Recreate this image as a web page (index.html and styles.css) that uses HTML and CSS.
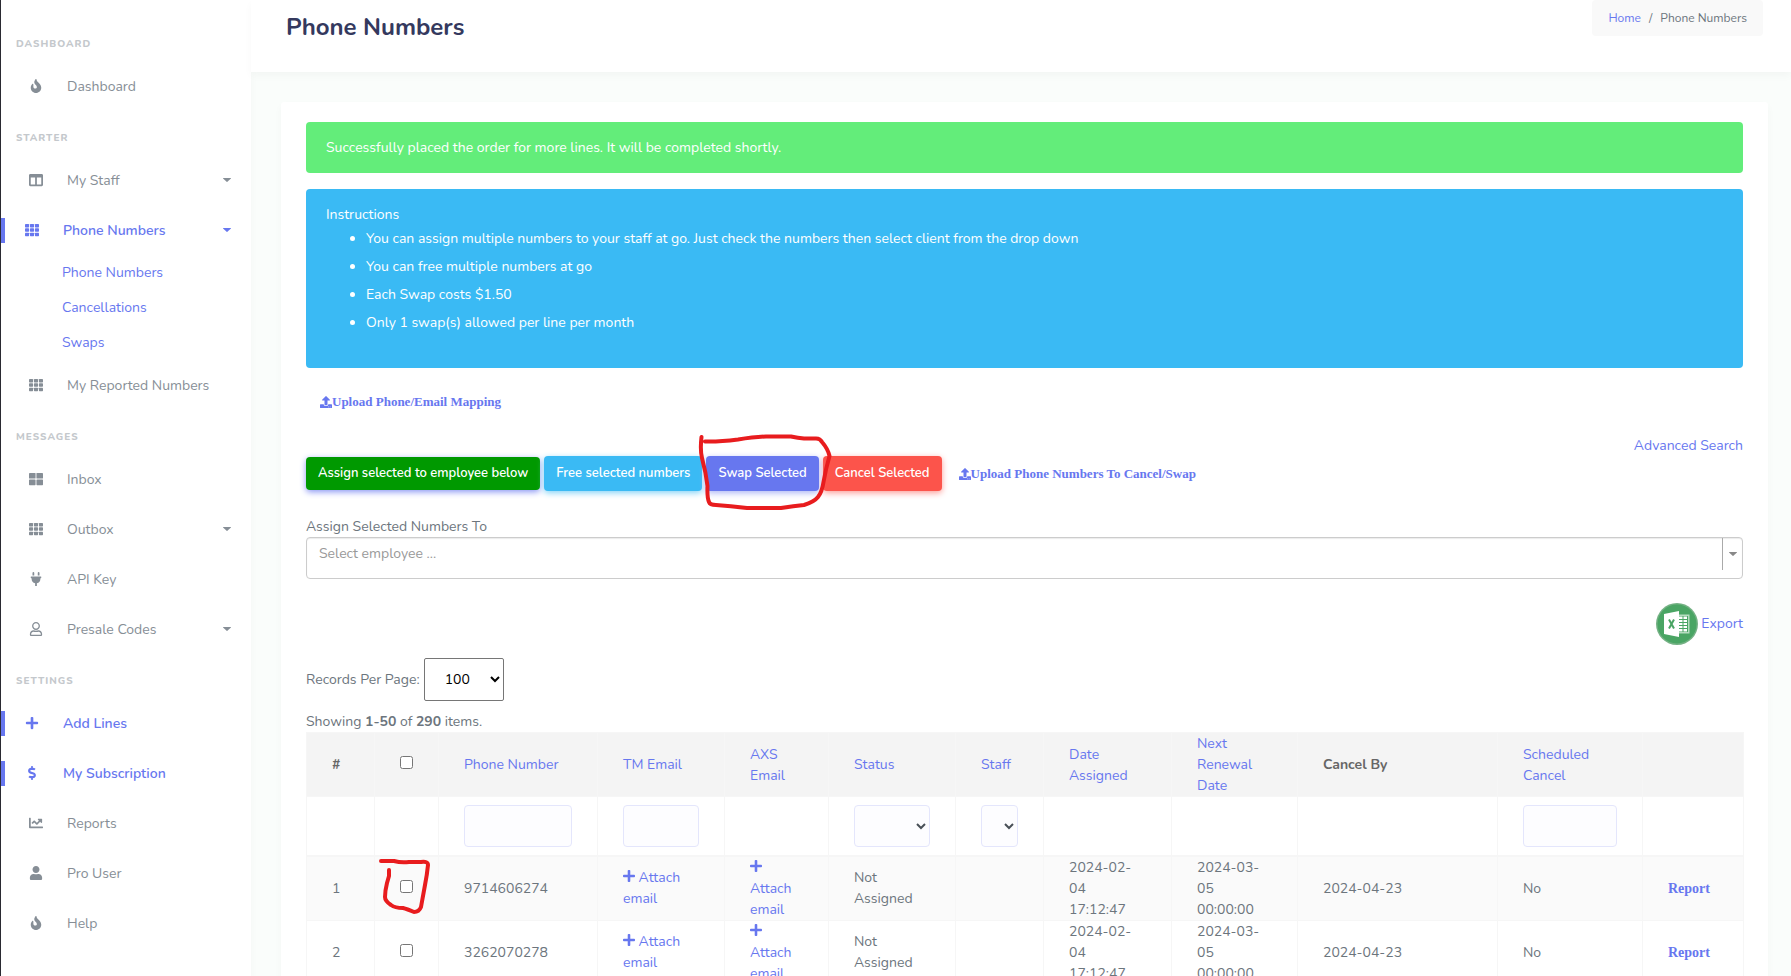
FILE: index.html
```html
<!DOCTYPE html>
<html lang="en">
<head>
<meta charset="utf-8">
<meta name="viewport" content="width=device-width, initial-scale=1">
<title>Phone Numbers</title>
<link rel="stylesheet" href="styles.css">
</head>
<body>
<svg class="sprite" aria-hidden="true">
  <symbol id="i-fire" viewBox="0 0 384 512"><path d="M216 23.86c0-23.8-30.65-32.77-44.15-13.04C48 191.85 224 200 224 288c0 35.63-29.11 64.46-64.85 63.99-35.17-.45-63.15-29.77-63.15-64.94v-85.51c0-21.7-26.47-32.23-41.43-16.5C27.8 213.16 0 261.33 0 320c0 105.87 86.13 192 192 192s192-86.13 192-192c0-170.29-168-193-168-296.14z"/></symbol>
  <symbol id="i-columns" viewBox="0 0 512 512"><path d="M464 32H48C21.49 32 0 53.49 0 80v352c0 26.51 21.49 48 48 48h416c26.51 0 48-21.49 48-48V80c0-26.51-21.49-48-48-48zM224 416H64V160h160v256zm224 0H288V160h160v256z"/></symbol>
  <symbol id="i-th" viewBox="0 0 512 512"><g><rect x="0" y="32" width="149" height="128" rx="24"/><rect x="181" y="32" width="150" height="128" rx="24"/><rect x="363" y="32" width="149" height="128" rx="24"/><rect x="0" y="192" width="149" height="128" rx="24"/><rect x="181" y="192" width="150" height="128" rx="24"/><rect x="363" y="192" width="149" height="128" rx="24"/><rect x="0" y="352" width="149" height="128" rx="24"/><rect x="181" y="352" width="150" height="128" rx="24"/><rect x="363" y="352" width="149" height="128" rx="24"/></g></symbol>
  <symbol id="i-th-large" viewBox="0 0 512 512"><g><rect x="0" y="32" width="240" height="208" rx="24"/><rect x="272" y="32" width="240" height="208" rx="24"/><rect x="0" y="272" width="240" height="208" rx="24"/><rect x="272" y="272" width="240" height="208" rx="24"/></g></symbol>
  <symbol id="i-plug" viewBox="0 0 384 512"><path d="M320 32a32 32 0 0 0-64 0v96h64zm48 128H16A16 16 0 0 0 0 176v32a16 16 0 0 0 16 16h16v32a160.07 160.07 0 0 0 128 156.8V512h64v-99.2A160.07 160.07 0 0 0 352 256v-32h16a16 16 0 0 0 16-16v-32a16 16 0 0 0-16-16zM128 32a32 32 0 0 0-64 0v96h64z"/></symbol>
  <symbol id="i-user" viewBox="0 0 448 512"><path d="M224 256c70.7 0 128-57.3 128-128S294.7 0 224 0 96 57.3 96 128s57.3 128 128 128zm89.6 32h-16.7c-22.2 10.2-46.9 16-72.9 16s-50.6-5.8-72.9-16h-16.7C60.2 288 0 348.2 0 422.4V464c0 26.5 21.5 48 48 48h352c26.5 0 48-21.5 48-48v-41.6c0-74.2-60.2-134.4-134.4-134.4z"/></symbol>
  <symbol id="i-user-o" viewBox="0 0 448 512"><path d="M313.6 304c-28.7 0-42.5 16-89.6 16-47.1 0-60.8-16-89.6-16C60.2 304 0 364.2 0 438.4V464c0 26.5 21.5 48 48 48h352c26.5 0 48-21.5 48-48v-25.6c0-74.2-60.2-134.4-134.4-134.4zM400 464H48v-25.6c0-47.6 38.8-86.4 86.4-86.4 14.6 0 38.3 16 89.6 16 51.7 0 74.9-16 89.6-16 47.6 0 86.4 38.8 86.4 86.4V464zM224 288c79.5 0 144-64.5 144-144S303.5 0 224 0 80 64.5 80 144s64.5 144 144 144zm0-240c52.9 0 96 43.1 96 96s-43.1 96-96 96-96-43.1-96-96 43.1-96 96-96z"/></symbol>
  <symbol id="i-plus" viewBox="0 0 448 512"><path d="M416 208H272V64c0-17.67-14.33-32-32-32h-32c-17.67 0-32 14.33-32 32v144H32c-17.67 0-32 14.33-32 32v32c0 17.67 14.33 32 32 32h144v144c0 17.67 14.33 32 32 32h32c17.67 0 32-14.33 32-32V304h144c17.67 0 32-14.33 32-32v-32c0-17.67-14.33-32-32-32z"/></symbol>
  <symbol id="i-dollar" viewBox="0 0 288 512"><path d="M209.2 233.4l-108-31.6C88.7 198.2 80 186.5 80 173.5c0-16.3 13.2-29.5 29.5-29.5h66.3c12.2 0 24.2 3.7 34.2 10.5 6.1 4.1 14.3 3.1 19.5-2l34.8-34c7.1-6.9 6.1-18.4-1.8-24.5C238 74.8 207.4 64.1 176 64V16c0-8.8-7.2-16-16-16h-32c-8.8 0-16 7.2-16 16v48h-2.5C45.8 64-5.4 118.7.5 183.6c4.2 46.1 39.4 83.6 83.8 96.6l102.5 30c12.5 3.7 21.2 15.3 21.2 28.3 0 16.3-13.2 29.5-29.5 29.5h-66.3C100 368 88 364.3 78 357.5c-6.1-4.1-14.3-3.1-19.5 2l-34.8 34c-7.1 6.9-6.1 18.4 1.8 24.5 24.5 19.2 55.1 29.9 86.5 30v48c0 8.8 7.2 16 16 16h32c8.8 0 16-7.2 16-16v-48.2c46.6-.9 90.3-28.6 105.7-72.7 21.5-61.6-14.6-124.8-72.5-141.7z"/></symbol>
  <symbol id="i-chart" viewBox="0 0 512 512"><path d="M496 384H64V80c0-8.84-7.16-16-16-16H16C7.16 64 0 71.16 0 80v336c0 17.67 14.33 32 32 32h464c8.84 0 16-7.16 16-16v-32c0-8.84-7.16-16-16-16zM464 96H345.94c-21.38 0-32.09 25.85-16.97 40.97l32.4 32.4L288 242.75l-73.37-73.37c-12.5-12.5-32.76-12.5-45.25 0l-68.69 68.69c-6.25 6.25-6.25 16.38 0 22.63l22.62 22.62c6.25 6.25 16.38 6.25 22.63 0L192 237.25l73.37 73.37c12.5 12.5 32.76 12.5 45.25 0l96-96 32.4 32.4c15.12 15.12 40.97 4.41 40.97-16.97V112c.01-8.84-7.15-16-15.99-16z"/></symbol>
  <symbol id="i-upload" viewBox="0 0 512 512"><path d="M296 384h-80c-13.3 0-24-10.7-24-24V192h-87.7c-17.8 0-26.7-21.5-14.1-34.1L242.3 5.7c7.5-7.5 19.8-7.5 27.3 0l152.2 152.2c12.6 12.6 3.7 34.1-14.1 34.1H320v168c0 13.3-10.7 24-24 24zm216-8v112c0 13.3-10.7 24-24 24H24c-13.3 0-24-10.7-24-24V376c0-13.3 10.7-24 24-24h136v8c0 30.9 25.1 56 56 56h80c30.9 0 56-25.1 56-56v-8h136c13.3 0 24 10.7 24 24zm-124 88c0-11-9-20-20-20s-20 9-20 20 9 20 20 20 20-9 20-20zm64 0c0-11-9-20-20-20s-20 9-20 20 9 20 20 20 20-9 20-20z"/></symbol>
  <symbol id="i-caret" viewBox="0 0 8 4"><path d="M.4 0h7.2c.4 0 .5.4.3.6L4.4 3.8a.6.6 0 0 1-.8 0L.1.6C-.1.4 0 0 .4 0z"/></symbol>
</svg>
<div class="layout">
  <nav class="sidebar" aria-label="Main">
    <h2 class="menu-header">DASHBOARD</h2>
    <a class="menu-item" href="#"><span class="menu-icon"><svg class="icon"><use href="#i-fire"/></svg></span><span class="menu-label">Dashboard</span></a>
    <h2 class="menu-header">STARTER</h2>
    <a class="menu-item" href="#"><span class="menu-icon"><svg class="icon"><use href="#i-columns"/></svg></span><span class="menu-label">My Staff</span><svg class="caret"><use href="#i-caret"/></svg></a>
    <a class="menu-item active" href="#"><span class="menu-icon"><svg class="icon"><use href="#i-th"/></svg></span><span class="menu-label">Phone Numbers</span><svg class="caret"><use href="#i-caret"/></svg></a>
    <div class="submenu">
      <a class="submenu-item" href="#">Phone Numbers</a>
      <a class="submenu-item" href="#">Cancellations</a>
      <a class="submenu-item" href="#">Swaps</a>
    </div>
    <a class="menu-item" href="#"><span class="menu-icon"><svg class="icon"><use href="#i-th"/></svg></span><span class="menu-label">My Reported Numbers</span></a>
    <h2 class="menu-header">MESSAGES</h2>
    <a class="menu-item" href="#"><span class="menu-icon"><svg class="icon"><use href="#i-th-large"/></svg></span><span class="menu-label">Inbox</span></a>
    <a class="menu-item" href="#"><span class="menu-icon"><svg class="icon"><use href="#i-th"/></svg></span><span class="menu-label">Outbox</span><svg class="caret"><use href="#i-caret"/></svg></a>
    <a class="menu-item" href="#"><span class="menu-icon"><svg class="icon"><use href="#i-plug"/></svg></span><span class="menu-label">API Key</span></a>
    <a class="menu-item" href="#"><span class="menu-icon"><svg class="icon"><use href="#i-user-o"/></svg></span><span class="menu-label">Presale Codes</span><svg class="caret"><use href="#i-caret"/></svg></a>
    <h2 class="menu-header">SETTINGS</h2>
    <a class="menu-item active" href="#"><span class="menu-icon"><svg class="icon"><use href="#i-plus"/></svg></span><span class="menu-label">Add Lines</span></a>
    <a class="menu-item active" href="#"><span class="menu-icon"><svg class="icon"><use href="#i-dollar"/></svg></span><span class="menu-label">My Subscription</span></a>
    <a class="menu-item" href="#"><span class="menu-icon"><svg class="icon"><use href="#i-chart"/></svg></span><span class="menu-label">Reports</span></a>
    <a class="menu-item" href="#"><span class="menu-icon"><svg class="icon"><use href="#i-user"/></svg></span><span class="menu-label">Pro User</span></a>
    <a class="menu-item" href="#"><span class="menu-icon"><svg class="icon"><use href="#i-fire"/></svg></span><span class="menu-label">Help</span></a>
  </nav>
  <main class="main">
    <header class="page-header">
      <h1 class="page-title">Phone Numbers</h1>
      <nav class="breadcrumb" aria-label="Breadcrumb"><a href="#">Home</a><span>/</span><span>Phone Numbers</span></nav>
    </header>
    <section class="card">
      <div class="alert alert-success" role="status">Successfully placed the order for more lines. It will be completed shortly.</div>
      <div class="alert alert-info">
        Instructions
        <ul class="instructions">
          <li>You can assign multiple numbers to your staff at go. Just check the numbers then select client from the drop down</li>
          <li>You can free multiple numbers at go</li>
          <li>Each Swap costs $1.50</li>
          <li>Only 1 swap(s) allowed per line per month</li>
        </ul>
      </div>
      <div class="upload-row"><a class="upload-link" href="#"><svg class="icon-sm"><use href="#i-upload"/></svg>Upload Phone/Email Mapping</a></div>
      <div class="search-row"><a href="#">Advanced Search</a></div>
      <div class="actions">
        <button class="btn btn-assign" type="button">Assign selected to employee below</button>
        <button class="btn btn-info" type="button">Free selected numbers</button>
        <span class="marked">
          <button class="btn btn-primary" type="button">Swap Selected</button>
          <svg class="mark mark-button" viewBox="0 0 138 80" aria-hidden="true"><path d="M5.500 5Q4 18 6 26Q10 41 11.500 54Q11 66 13 70Q14 73 20 73Q34 74 51 76H85Q98 74 108 73Q118 70 122 65Q126 60 127.500 50Q130 36 133.500 24Q132 17 126 10Q124 6 119 6.500H108Q102 6 95 4.500H70Q58 5 42 7.500Q22 10 9 9.500"/></svg>
        </span>
        <button class="btn btn-danger" type="button">Cancel Selected</button>
        <a class="upload-link" href="#"><svg class="icon-sm"><use href="#i-upload"/></svg>Upload Phone Numbers To Cancel/Swap</a>
      </div>
      <label class="field-label" for="employee">Assign Selected Numbers To</label>
      <div class="combo">
        <select id="employee" class="combo-select"><option>Select employee ...</option></select>
        <span class="combo-arrow"><svg class="caret"><use href="#i-caret"/></svg></span>
      </div>
      <div class="export-row">
        <a class="export-link" href="#">
          <svg class="excel" viewBox="0 0 42 42" aria-hidden="true"><circle cx="21" cy="21" r="21" fill="#74b184"/><circle cx="21" cy="21" r="19.500" fill="#4aa564"/><path d="M22 11.500h11.500v19H22z" fill="#b6dcc0"/><path d="M23 13h9v16h-9z" fill="#4aa564"/><path d="M23 13.500h3.500V16H23zM27.500 13.500H31V16h-3.500zM23 17h3.500v2H23zM27.500 17H31v2h-3.500zM23 20h3.500v2H23zM27.500 20H31v2h-3.500zM23 23h3.500v2H23zM27.500 23H31v2h-3.500zM23 26h3.500v2.500H23zM27.500 26H31v2.500h-3.500z" fill="#fff"/><path d="M8 11l15-3v26L8 31z" fill="#fff"/><path d="M13 16.500l5 9M18 16.500l-5 9" stroke="#4aa564" stroke-width="2" fill="none"/></svg>
          Export
        </a>
      </div>
      <div class="records-row">
        <label for="per-page">Records Per Page:</label>
        <select id="per-page" class="per-page"><option>100</option></select>
      </div>
      <div class="summary">Showing <b>1-50</b> of <b>290</b> items.</div>
      <table class="grid">
        <colgroup><col class="c-num"><col class="c-check"><col class="c-phone"><col class="c-tm"><col class="c-axs"><col class="c-status"><col class="c-staff"><col class="c-date"><col class="c-renew"><col class="c-cancel"><col class="c-sched"><col class="c-report"></colgroup>
        <thead>
          <tr class="head-row"><th>#</th><th><input type="checkbox" aria-label="Select all"></th><th><a href="#">Phone Number</a></th><th><a href="#">TM Email</a></th><th><a href="#">AXS Email</a></th><th><a href="#">Status</a></th><th><a href="#">Staff</a></th><th><a href="#">Date Assigned</a></th><th><a href="#">Next Renewal Date</a></th><th>Cancel By</th><th><a href="#">Scheduled Cancel</a></th><th></th></tr>
          <tr class="filter-row"><td></td><td></td><td><input class="filter" type="text" aria-label="Phone Number"></td><td><input class="filter" type="text" aria-label="TM Email"></td><td></td><td><select class="filter" aria-label="Status"><option></option></select></td><td><select class="filter" aria-label="Staff"><option></option></select></td><td></td><td></td><td></td><td><input class="filter" type="text" aria-label="Scheduled Cancel"></td><td></td></tr>
        </thead>
        <tbody>
          <tr class="odd"><td>1</td><td><span class="marked-cell"><input type="checkbox" aria-label="Select 9714606274"><svg class="mark mark-check" viewBox="0 0 54 60" aria-hidden="true"><path d="M4 6H17Q24 8 32 7H44Q51 6 51 10Q50 20 48 30L44 52Q42 57 37 57Q30 54 26 53Q18 53 14 50Q8 46 8 42Q8 36 10 28L12 21V15"/></svg></span></td><td>9714606274</td><td><a href="#"><svg class="plus"><use href="#i-plus"/></svg> Attach email</a></td><td><a href="#"><svg class="plus"><use href="#i-plus"/></svg> Attach email</a></td><td>Not Assigned</td><td></td><td>2024-02-04 17:12:47</td><td>2024-03-05 00:00:00</td><td>2024-04-23</td><td>No</td><td><a class="report" href="#">Report</a></td></tr>
          <tr><td>2</td><td><input type="checkbox" aria-label="Select 3262070278"></td><td>3262070278</td><td><a href="#"><svg class="plus"><use href="#i-plus"/></svg> Attach email</a></td><td><a href="#"><svg class="plus"><use href="#i-plus"/></svg> Attach email</a></td><td>Not Assigned</td><td></td><td>2024-02-04 17:12:47</td><td>2024-03-05 00:00:00</td><td>2024-04-23</td><td>No</td><td><a class="report" href="#">Report</a></td></tr>
        </tbody>
      </table>
    </section>
  </main>
</div>
</body>
</html>
```
FILE: styles.css
```css
* { box-sizing: border-box; }

body {
  margin: 0;
  background: #fafdfb;
  color: #6c757d;
  font: 14px/21px Nunito, Lato, "Open Sans", sans-serif;
}

a { color: #6777ef; text-decoration: none; }
button, input, select { font: inherit; }
svg { fill: currentColor; }
.sprite { display: none; }

.layout {
  display: flex;
  min-height: 100vh;
  border-left: 1px solid #2b2b33;
}

/* Sidebar */
.sidebar {
  flex: none;
  width: 250px;
  padding-top: 17px;
  background: #fff;
  box-shadow: 0 4px 8px rgba(0, 0, 0, 0.03);
}

.menu-header {
  margin: 0;
  padding: 16px 15px 6px;
  color: #c4c8cc;
  font-size: 10px;
  line-height: 22px;
  font-weight: 800;
  letter-spacing: 1px;
}

.menu-item {
  position: relative;
  display: flex;
  align-items: center;
  gap: 16px;
  height: 50px;
  padding: 0 20px;
  color: #868e96;
}

.menu-item.active { padding-left: 16px; color: #6777ef; font-weight: 600; }

.menu-item.active::before {
  content: "";
  position: absolute;
  left: 0;
  width: 4px;
  height: 25px;
  background: #6777ef;
}

.menu-icon { display: flex; justify-content: center; width: 30px; }
.icon { width: 14px; height: 14px; }
.menu-label { flex: 1; }
.caret { width: 8px; height: 4px; }

.submenu-item {
  display: block;
  padding: 0 61px;
  line-height: 35px;
}

/* Page header */
.main { flex: 1; min-width: 0; }

.page-header {
  display: flex;
  justify-content: space-between;
  align-items: flex-start;
  height: 72px;
  padding: 0 28px 0 35px;
  background: #fff;
  box-shadow: 0 4px 8px rgba(0, 0, 0, 0.03);
}

.page-title {
  margin: 0;
  padding-top: 12px;
  color: #34395e;
  font-size: 24px;
  line-height: 30px;
  font-weight: 700;
}

.breadcrumb {
  display: flex;
  gap: 8px;
  padding: 9px 16px;
  border-radius: 4px;
  background: #f9f9f9;
  font-size: 12px;
  line-height: 18px;
}

/* Card */
.card {
  margin: 30px 23px 0 30px;
  padding: 20px 25px;
  border-radius: 3px;
  background: #fff;
  box-shadow: 0 4px 8px rgba(0, 0, 0, 0.03);
}

.alert {
  margin-bottom: 16px;
  padding: 15px 20px;
  border-radius: 4px;
  color: #fff;
}

.alert-success { background: #63ed7a; }
.alert-info { background: #3abaf4; }

.instructions { margin: 0 0 16px; padding-left: 40px; line-height: 28px; }

.upload-row { display: flex; padding: 7px 14px; }

.upload-link {
  display: inline-flex;
  align-items: center;
  font-family: "Liberation Serif", serif;
  font-size: 13px;
  line-height: 21px;
  font-weight: 700;
}

.icon-sm { width: 12px; height: 12px; }

.search-row { padding-top: 16px; text-align: right; }

.actions { display: flex; align-items: center; gap: 4px; }
.actions .upload-link { margin-left: 13px; }

.btn {
  padding: 0 12px;
  border: 0;
  border-radius: 4px;
  color: #fff;
  font-size: 13px;
  line-height: 35px;
  font-weight: 600;
  white-space: nowrap;
}

.btn-assign { background: #090; line-height: 33px; box-shadow: 0 2px 6px #8a96f4; }
.btn-info { background: #3abaf4; box-shadow: 0 2px 6px #82d3f8; }
.btn-primary { background: #6777ef; box-shadow: 0 2px 6px #acb5f6; }
.btn-danger { background: #fc544b; box-shadow: 0 2px 6px #fd9b96; }

.marked, .marked-cell { position: relative; display: inline-flex; }
.marked-cell { display: flex; width: 13px; }

.mark {
  position: absolute;
  z-index: 1;
  fill: none;
  stroke: #e81c1e;
  stroke-width: 4px;
  stroke-linecap: round;
  stroke-linejoin: round;
  pointer-events: none;
}

.mark-button { left: -10px; top: -24px; width: 138px; height: 80px; }
.mark-check { left: -23px; top: -25px; width: 54px; height: 60px; }

.field-label { display: block; padding-top: 25px; }

.combo { position: relative; }

.combo-select {
  display: block;
  width: 100%;
  height: 42px;
  padding: 0 30px 10px 12px;
  border: 1px solid #ccc;
  border-radius: 4px;
  background: #fff;
  box-shadow: inset 0 1px 1px rgba(0, 0, 0, 0.08);
  color: #999;
  appearance: none;
}

.combo-arrow {
  position: absolute;
  top: 1px;
  right: 1px;
  display: flex;
  align-items: center;
  justify-content: center;
  width: 20px;
  height: 32px;
  border-left: 1px solid #aaa;
  color: #888;
  pointer-events: none;
}

.export-row { display: flex; justify-content: flex-end; padding-top: 24px; }
.export-link { display: flex; align-items: center; gap: 3px; line-height: 18px; }
.excel { width: 42px; height: 42px; }

.records-row { display: flex; align-items: center; gap: 4px; padding: 13px 0 10px; }

.per-page {
  width: 80px;
  height: 43px;
  padding: 0 0 0 16px;
  border: 1px solid #767676;
  border-radius: 2px;
  background: #fff;
  color: #000;
}

/* Table */
.grid {
  width: 100%;
  border-collapse: collapse;
  table-layout: fixed;
}

.c-num { width: 68px; }
.c-check { width: 64px; }
.c-phone { width: 159px; }
.c-tm { width: 127px; }
.c-axs { width: 104px; }
.c-status { width: 127px; }
.c-staff { width: 88px; }
.c-date { width: 128px; }
.c-renew { width: 126px; }
.c-cancel { width: 200px; }
.c-sched { width: 145px; }
.c-report { width: 101px; }

.grid th, .grid td {
  padding: 0 25px;
  border: 1px solid #f6f6f6;
  text-align: left;
}

.head-row th { background: #f4f4f4; color: #666; }
.head-row a { font-weight: 400; }
.grid .filter-row td { height: 59px; border-bottom: 2px solid #f6f6f6; }
.odd { background: #fafafa; }
.grid input[type="checkbox"] { display: block; width: 13px; height: 13px; margin: 0 0 4px; }

.filter {
  display: block;
  width: 100%;
  height: 42px;
  border: 1px solid #e4e6fc;
  border-radius: 4px;
  background: #fdfdff;
  color: #495057;
}

.plus { width: 12px; height: 14px; vertical-align: -1px; }
.report { font-family: "Liberation Serif", serif; font-weight: 700; }
```
